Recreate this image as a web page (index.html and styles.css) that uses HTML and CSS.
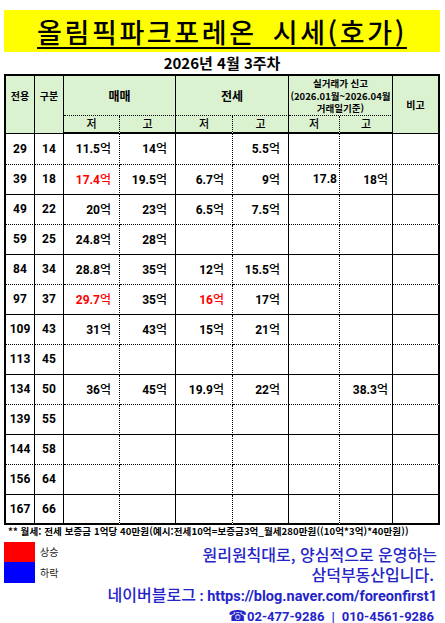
FILE: index.html
```html
<!DOCTYPE html>
<html lang="ko">
<head>
<meta charset="utf-8">
<title>올림픽파크포레온 시세(호가)</title>
<link rel="stylesheet" href="styles.css">
</head>
<body>
<div class="page">
  <div class="title"><span>올림픽파크포레온 시세(호가)</span></div>
  <div class="sub">2026년 4월 3주차</div>
  <table class="grid">
    <colgroup>
      <col class="w29"><col class="w29"><col class="w56"><col class="w56"><col class="w57"><col class="w56"><col class="w51"><col class="w53"><col class="w47">
    </colgroup>
    <thead>
      <tr class="h1">
        <th rowspan="2" class="small top">전용</th>
        <th rowspan="2" class="small top">구분</th>
        <th colspan="2" class="grp">매매</th>
        <th colspan="2" class="grp">전세</th>
        <th colspan="2" class="grp sil"><div class="sl">실거래가 신고</div><div class="sl">(2026.01월~2026.04월</div><div class="sl">거래일기준)</div></th>
        <th rowspan="2" class="small last">비고</th>
      </tr>
      <tr class="h2">
        <th class="lo">저</th><th>고</th>
        <th class="lo">저</th><th>고</th>
        <th class="lo">저</th><th>고</th>
      </tr>
    </thead>
    <tbody>
      <tr class="d first"><td class="k">29</td><td class="k">14</td><td class="v lo">11.5<span class="u">억</span></td><td class="v">14<span class="u">억</span></td><td class="v lo"></td><td class="v">5.5<span class="u">억</span></td><td class="v s lo"></td><td class="v s"></td><td class="last"></td></tr>
      <tr><td class="k">39</td><td class="k">18</td><td class="v lo red">17.4<span class="u">억</span></td><td class="v">19.5<span class="u">억</span></td><td class="v lo">6.7<span class="u">억</span></td><td class="v">9<span class="u">억</span></td><td class="v s t lo">17.8</td><td class="v s">18<span class="u">억</span></td><td class="last"></td></tr>
      <tr class="d"><td class="k">49</td><td class="k">22</td><td class="v lo">20<span class="u">억</span></td><td class="v">23<span class="u">억</span></td><td class="v lo">6.5<span class="u">억</span></td><td class="v">7.5<span class="u">억</span></td><td class="v s lo"></td><td class="v s"></td><td class="last"></td></tr>
      <tr><td class="k">59</td><td class="k">25</td><td class="v lo">24.8<span class="u">억</span></td><td class="v">28<span class="u">억</span></td><td class="v lo"></td><td class="v"></td><td class="v s lo"></td><td class="v s"></td><td class="last"></td></tr>
      <tr class="d"><td class="k">84</td><td class="k">34</td><td class="v lo">28.8<span class="u">억</span></td><td class="v">35<span class="u">억</span></td><td class="v lo">12<span class="u">억</span></td><td class="v">15.5<span class="u">억</span></td><td class="v s lo"></td><td class="v s"></td><td class="last"></td></tr>
      <tr><td class="k">97</td><td class="k">37</td><td class="v lo red">29.7<span class="u">억</span></td><td class="v">35<span class="u">억</span></td><td class="v lo red">16<span class="u">억</span></td><td class="v">17<span class="u">억</span></td><td class="v s lo"></td><td class="v s"></td><td class="last"></td></tr>
      <tr class="d"><td class="k">109</td><td class="k">43</td><td class="v lo">31<span class="u">억</span></td><td class="v">43<span class="u">억</span></td><td class="v lo">15<span class="u">억</span></td><td class="v">21<span class="u">억</span></td><td class="v s lo"></td><td class="v s"></td><td class="last"></td></tr>
      <tr><td class="k">113</td><td class="k">45</td><td class="v lo"></td><td class="v"></td><td class="v lo"></td><td class="v"></td><td class="v s lo"></td><td class="v s"></td><td class="last"></td></tr>
      <tr class="d"><td class="k">134</td><td class="k">50</td><td class="v lo">36<span class="u">억</span></td><td class="v">45<span class="u">억</span></td><td class="v lo">19.9<span class="u">억</span></td><td class="v">22<span class="u">억</span></td><td class="v s lo"></td><td class="v s">38.3<span class="u">억</span></td><td class="last"></td></tr>
      <tr><td class="k">139</td><td class="k">55</td><td class="v lo"></td><td class="v"></td><td class="v lo"></td><td class="v"></td><td class="v s lo"></td><td class="v s"></td><td class="last"></td></tr>
      <tr class="d"><td class="k">144</td><td class="k">58</td><td class="v lo"></td><td class="v"></td><td class="v lo"></td><td class="v"></td><td class="v s lo"></td><td class="v s"></td><td class="last"></td></tr>
      <tr><td class="k">156</td><td class="k">64</td><td class="v lo"></td><td class="v"></td><td class="v lo"></td><td class="v"></td><td class="v s lo"></td><td class="v s"></td><td class="last"></td></tr>
      <tr class="end"><td class="k">167</td><td class="k">66</td><td class="v lo"></td><td class="v"></td><td class="v lo"></td><td class="v"></td><td class="v s lo"></td><td class="v s"></td><td class="last"></td></tr>
    </tbody>
  </table>
  <div class="note">** 월세: 전세 보증금 1억당 40만원(예시:전세10억=보증금3억_월세280만원((10억*3억)*40만원))</div>
  <div class="foot">
    <div class="legend">
      <div class="lg"><span class="sw up"></span><span class="lbl">상승</span></div>
      <div class="lg"><span class="sw down"></span><span class="lbl">하락</span></div>
    </div>
    <div class="msg">
      <div class="line l1">원리원칙대로, 양심적으로 운영하는</div>
      <div class="line l2">삼덕부동산입니다.</div>
      <div class="line l3"><span class="kr">네이버블로그</span><span class="en"> : https://blog.naver.com/foreonfirst1</span></div>
      <div class="line l4"><span class="tel">☎</span><span class="en">02-477-9286<span class="bar">|</span>010-4561-9286</span></div>
    </div>
  </div>
</div>
</body>
</html>
```
FILE: styles.css
```css
html, body {
  margin: 0;
  padding: 0;
  overflow: hidden;
  background: #fff;
}
body {
  font-family: Roboto, "Noto Sans CJK KR", sans-serif;
  color: #000;
}
.page {
  width: 445px;
  height: 623px;
  box-sizing: border-box;
  padding: 10px 0 0 4px;
}
.title {
  width: 436px;
  height: 42px;
  background: #ffff00;
  display: flex;
  align-items: center;
  justify-content: center;
}
.title span {
  font-family: "Noto Sans CJK KR", sans-serif;
  font-weight: 500;
  font-size: 27px;
  line-height: 1;
  letter-spacing: 2.6px;
  word-spacing: 6px;
  text-decoration: underline;
  text-decoration-thickness: 2px;
  text-underline-offset: 4px;
}
.sub {
  width: 436px;
  height: 22px;
  line-height: 22px;
  text-align: center;
  font-family: "Noto Sans CJK KR", sans-serif;
  font-weight: 700;
  font-size: 15px;
}
.grid {
  border-collapse: separate;
  border-spacing: 0;
  table-layout: fixed;
  width: 436px;
  border-top: 2px solid #000;
  border-left: 2px solid #000;
}
.w29 { width: 29px; }
.w47 { width: 47px; }
.w51 { width: 51px; }
.w53 { width: 53px; }
.w56 { width: 56px; }
.w57 { width: 57px; }
.grid th, .grid td {
  padding: 0;
  border-right: 1px solid #000;
  border-bottom: 1px solid #000;
  white-space: nowrap;
  overflow: visible;
}
.grid th {
  background: #daf2d0;
  font-family: "Noto Sans CJK KR", sans-serif;
  font-weight: 700;
  font-size: 11px;
  line-height: 13px;
  text-align: center;
  vertical-align: middle;
}
.grid th.small { font-size: 10px; }
.grid th.top { vertical-align: top; padding-top: 13px; }
.grid th.grp { border-bottom-style: dotted; font-size: 12px; }
.grid th.sil { vertical-align: top; padding-top: 1px; }
.grid th.sil .sl {
  height: 12.5px;
  line-height: 12.5px;
  font-size: 9.5px;
  overflow: visible;
}
.grid .lo { border-right-style: dotted; }
.grid .last { border-right-width: 2px; }
.h1 { height: 39px; }
.h2 { height: 18px; }
.h2 th { border-bottom-width: 2px; font-weight: 500; }
.grid tbody tr { height: 30px; }
.grid tbody tr.first { height: 31px; }
.grid tr.d td { border-bottom-style: dotted; }
.grid tr.end td { border-bottom-width: 2px; }
.grid td {
  font-family: Roboto, "Noto Sans CJK KR", sans-serif;
  font-weight: 700;
  font-size: 12px;
  line-height: 14px;
  vertical-align: middle;
}
.grid td.k { text-align: center; }
.grid td.v { text-align: right; padding-right: 8px; }
.grid td.s { padding-right: 4px; }
.grid td.t { padding-right: 2px; }
.grid td.red { color: #f00; }
.u {
  font-family: "Noto Sans CJK KR", sans-serif;
  font-weight: 500;
  font-size: 12px;
}
.note {
  height: 12px;
  line-height: 12px;
  padding-left: 4px;
  font-family: "Noto Sans CJK KR", sans-serif;
  font-weight: 700;
  font-size: 9.5px;
  letter-spacing: 0.1px;
  white-space: nowrap;
}
.foot {
  display: flex;
  margin-top: 5px;
}
.legend {
  display: flex;
  flex-direction: column;
}
.lg {
  display: flex;
  align-items: center;
  height: 20.5px;
}
.sw {
  width: 31px;
  height: 100%;
}
.sw.up { background: #ff0000; }
.sw.down { background: #0000ff; }
.lbl {
  margin-left: 5px;
  font-family: "Noto Sans CJK KR", sans-serif;
  font-size: 10px;
  color: #222;
}
.msg {
  flex: 1;
  text-align: right;
  padding: 2px 8px 0 0;
  color: #2424c8;
}
.line {
  height: 20px;
  line-height: 20px;
  white-space: nowrap;
  font-family: "Noto Sans CJK KR", sans-serif;
  font-weight: 500;
  font-size: 16px;
}
.l2 { padding-right: 3px; }
.en {
  font-family: Roboto, sans-serif;
  font-weight: 700;
  font-size: 14.5px;
}
.l4 .en { font-size: 13px; }
.tel {
  font-family: "DejaVu Sans", sans-serif;
  font-size: 15px;
}
.bar { margin: 0 7px; }
.l4 { padding-right: 3px; }
```
